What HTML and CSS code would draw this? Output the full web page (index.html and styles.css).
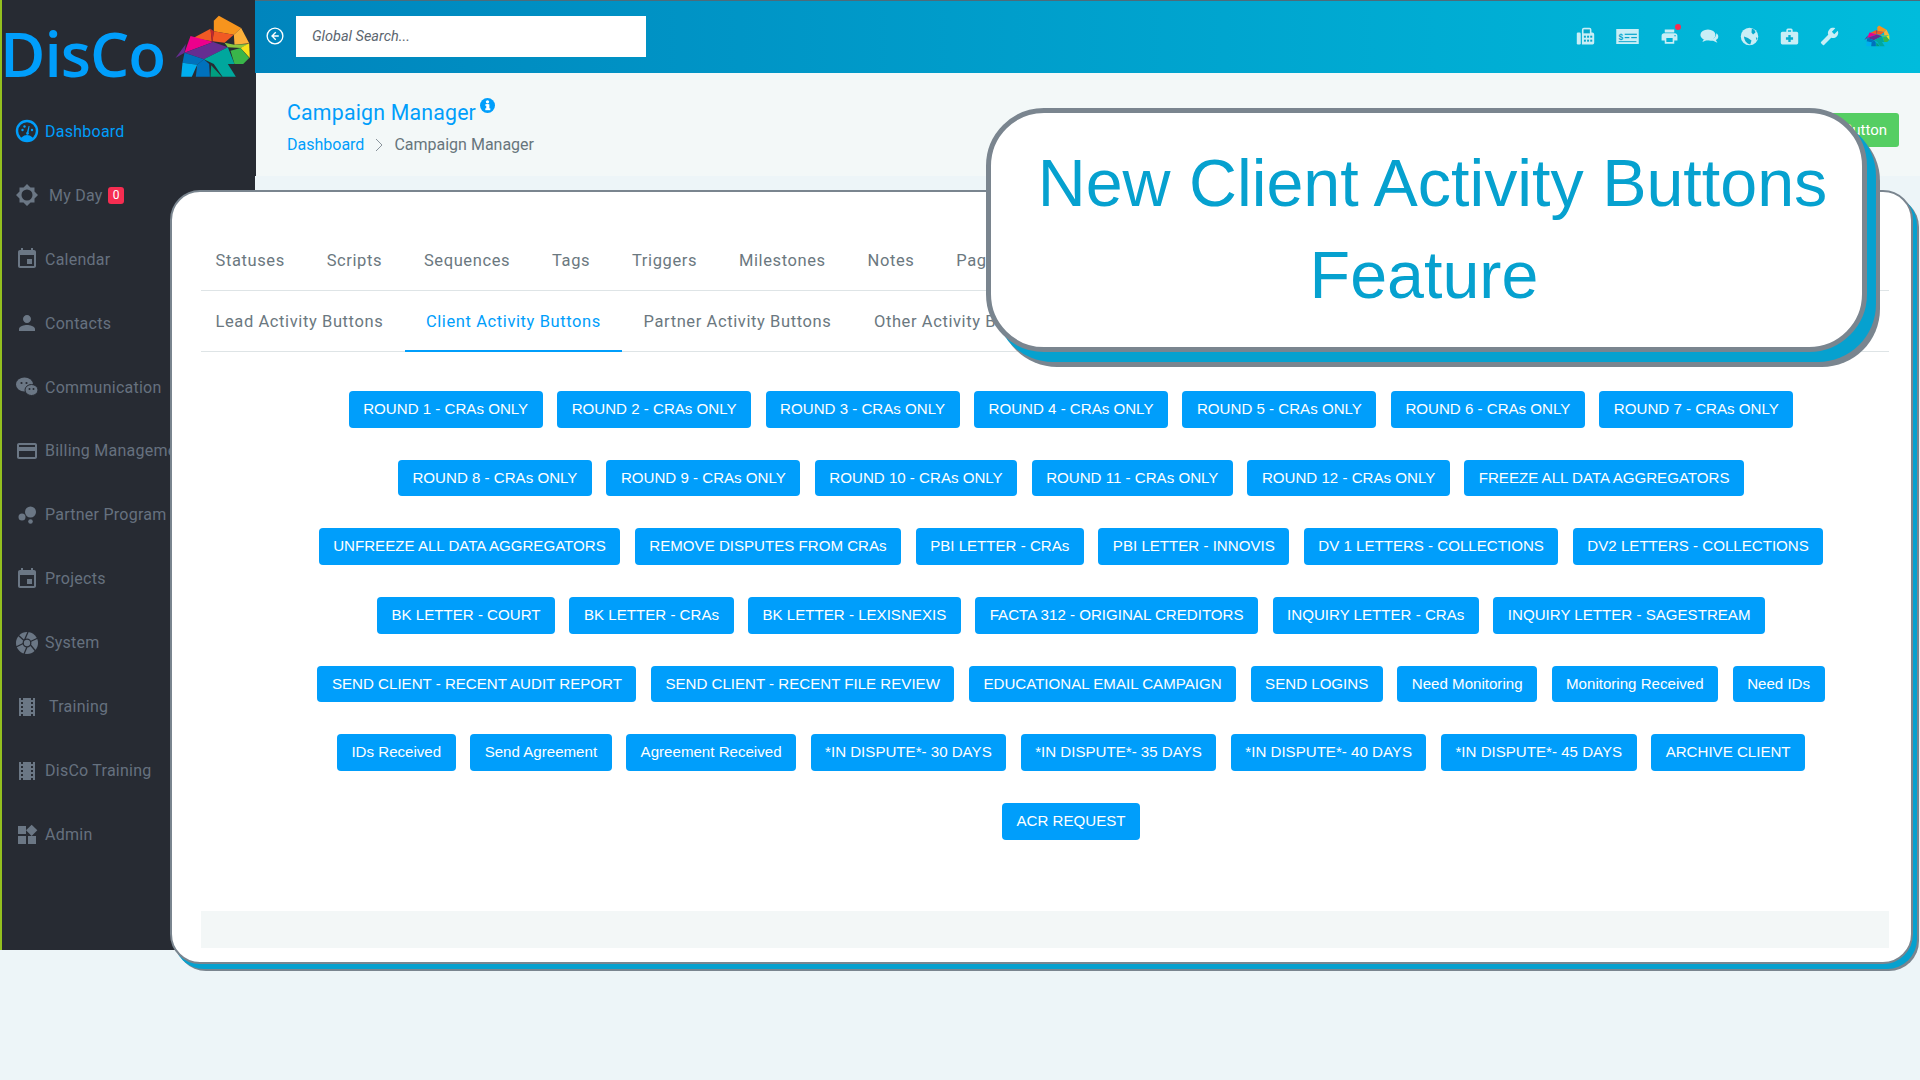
FILE: index.html
```html
<!DOCTYPE html>
<html lang="en">
  <head>
    <meta charset="UTF-8" />
    <meta name="viewport" content="width=device-width, initial-scale=1.0" />
    <title>Campaign Manager</title>
    <link rel="stylesheet" href="styles.css">
  </head>
  <body>
    <svg class="defs" width="0" height="0">
      <symbol id="elephant" viewBox="525 40 225 195">
        <polygon fill="#f7941d" points="640,60 655,45 722,82 700,102 640,92" />
        <polygon fill="#f15a24" points="640,92 700,102 672,126 636,122" />
        <polygon fill="#fbb03b" points="722,82 746,128 702,132 700,102" />
        <polygon fill="#f15a24" points="578,112 630,84 634,122" />
        <polygon fill="#c1272d" points="630,84 640,92 636,122 634,122" />
        <polygon fill="#ec008c" points="570,106 638,124 552,156" />
        <polygon fill="#662d91" points="552,156 638,124 682,140 610,176" />
        <polygon fill="#662d91" points="525,172 556,130 552,156" />
        <polygon fill="#8cc63f" points="672,126 702,132 746,130 720,142 682,140" />
        <polygon fill="#f7e11b" points="746,128 748,172 720,142" />
        <polygon fill="#00a79d" points="610,176 682,140 702,190 640,190" />
        <polygon fill="#39b54a" points="720,142 746,172 728,190 702,190 690,150" />
        <polygon fill="#0071bc" points="552,156 610,176 590,192 546,186" />
        <polygon fill="#00aeef" points="546,186 590,192 574,228 542,228" />
        <polygon fill="#0071bc" points="590,192 610,176 626,190 628,228 586,228" />
        <polygon fill="#009e7f" points="632,194 664,228 630,228" />
        <polygon fill="#00a79d" points="640,190 682,190 706,228 666,228" />
      </symbol>
      <symbol id="film" viewBox="0 0 24 24"><path d="M18 3v2h-2V3H8v2H6V3H4v18h2v-2h2v2h8v-2h2v2h2V3h-2zM8 17H6v-2h2v2zm0-4H6v-2h2v2zm0-4H6V7h2v2zm10 8h-2v-2h2v2zm0-4h-2v-2h2v2zm0-4h-2V7h2v2z" /></symbol>
      <symbol id="event" viewBox="0 0 24 24"><path d="M17 12h-5v5h5v-5zM16 1v2H8V1H6v2H5c-1.11 0-1.99.9-1.99 2L3 19c0 1.1.89 2 2 2h14c1.1 0 2-.9 2-2V5c0-1.1-.9-2-2-2h-1V1h-2zm3 18H5V8h14v11z" /></symbol>
    </svg>

    <div class="app">
      <aside class="sidebar">
        <div class="logo">
          <span class="logo-text">DisCo</span>
          <svg class="logo-mark"><use href="#elephant" /></svg>
        </div>
        <nav class="side-nav">
          <a class="side-item active">
            <svg class="side-icon" viewBox="0 0 24 24"><circle cx="12" cy="12" r="10" fill="none" stroke="currentColor" stroke-width="2.4" /><path d="M7 18a7 7 0 0 1 10 0l1.5 1.5a10 10 0 0 1-13 0z" /><path d="M12 13l1.6-6h1l-1 6.4a1.4 1.4 0 1 1-1.6-.4z" /><circle cx="7.5" cy="11" r="1.2" /><circle cx="9.5" cy="7.5" r="1.2" /><circle cx="17" cy="11" r="1.2" /></svg>
            Dashboard
          </a>
          <a class="side-item">
            <svg class="side-icon" viewBox="0 0 24 24"><path fill-rule="evenodd" d="M12 1l3.5 3.5h4V8.500L23 12l-3.500 3.500v4h-4L12 23l-3.500-3.500h-4v-4L1 12l3.500-3.500v-4h4zM12 6.500a5.500 5.500 0 1 0 0 11 5.500 5.500 0 0 0 0-11z" /></svg>
            <span class="side-label-wide">My Day</span>
            <span class="count">0</span>
          </a>
          <a class="side-item">
            <svg class="side-icon"><use href="#event" /></svg>
            Calendar
          </a>
          <a class="side-item">
            <svg class="side-icon" viewBox="0 0 24 24"><path d="M12 12c2.210 0 4-1.790 4-4s-1.790-4-4-4-4 1.790-4 4 1.790 4 4 4zm0 2c-2.670 0-8 1.340-8 4v2h16v-2c0-2.660-5.330-4-8-4z" /></svg>
            Contacts
          </a>
          <a class="side-item">
            <svg class="side-icon" viewBox="0 0 24 24"><ellipse cx="9.500" cy="9.500" rx="8.500" ry="7" /><ellipse cx="16.500" cy="15" rx="6.500" ry="5.500" stroke="#272b33" /><circle cx="6.500" cy="8" r="1.100" fill="#272b33" /><circle cx="11.500" cy="8" r="1.100" fill="#272b33" /><circle cx="14.500" cy="14" r="1" fill="#272b33" /><circle cx="18.500" cy="14" r="1" fill="#272b33" /></svg>
            Communication
          </a>
          <a class="side-item">
            <svg class="side-icon" viewBox="0 0 24 24"><path d="M20 4H4c-1.110 0-1.990.890-1.990 2L2 18c0 1.110.890 2 2 2h16c1.110 0 2-.890 2-2V6c0-1.110-.890-2-2-2zm0 14H4v-6h16v6zm0-10H4V6h16v2z" /></svg>
            Billing Management
          </a>
          <a class="side-item">
            <svg class="side-icon" viewBox="0 0 24 24"><circle cx="7" cy="14" r="3.500" /><circle cx="15.500" cy="9" r="5.500" /><circle cx="15.500" cy="18.500" r="2.300" /></svg>
            Partner Program
          </a>
          <a class="side-item">
            <svg class="side-icon"><use href="#event" /></svg>
            Projects
          </a>
          <a class="side-item">
            <svg class="side-icon" viewBox="0 0 24 24"><circle cx="12" cy="12" r="11" /><g fill="none" stroke="#272b33" stroke-width="1.300"><circle cx="12" cy="12" r="3.800" /><path d="M9.500 9L13 1M15.500 10.500L23 7M15.500 14L21 20.500M12 16L9 23M8.200 12.500L1 16M9 9.500L3 4" /></g></svg>
            System
          </a>
          <a class="side-item">
            <svg class="side-icon"><use href="#film" /></svg>
            <span class="side-label-wide">Training</span>
          </a>
          <a class="side-item">
            <svg class="side-icon"><use href="#film" /></svg>
            DisCo Training
          </a>
          <a class="side-item">
            <svg class="side-icon" viewBox="0 0 24 24"><path d="M13 13v8h8v-8h-8zM3 21h8v-8H3v8zM3 3v8h8V3H3zm13.660-1.310L11 7.340 16.660 13l5.660-5.660-5.660-5.650z" /></svg>
            Admin
          </a>
        </nav>
      </aside>

      <div class="main">
        <header class="topbar">
          <svg class="back-icon" viewBox="0 0 24 24" fill="none" stroke="#fff" stroke-width="1.800"><circle cx="12" cy="12" r="10.500" /><path d="M13 7l-5 5 5 5M8 12h9" /></svg>
          <input class="search" type="text" placeholder="Global Search..." />
          <div class="top-icons">
            <svg class="top-icon" viewBox="0 0 24 24"><rect x="1" y="7" width="5" height="15" rx="1.500" /><path d="M7.500 7V3.500A2.500 2.500 0 0 1 10 1h7a2.500 2.500 0 0 1 2.500 2.500V7h1A2.500 2.500 0 0 1 23 9.500V20a2 2 0 0 1-2 2H7.500z" /><g fill="#06a8cc"><rect x="9.500" y="3" width="8" height="5" /><rect x="10" y="11" width="2.500" height="2.500" /><rect x="14" y="11" width="2.500" height="2.500" /><rect x="18" y="11" width="2.500" height="2.500" /><rect x="10" y="16" width="2.500" height="2.500" /><rect x="14" y="16" width="2.500" height="2.500" /><rect x="18" y="16" width="2.500" height="2.500" /></g></svg>
            <svg class="top-icon cheque" viewBox="0 0 24 16"><rect width="24" height="16" /><g fill="#08a5cc"><text x="2.500" y="11.500" font-family="Liberation Sans, sans-serif" font-size="9" font-weight="700">$</text><rect x="9" y="5" width="13" height="1.300" /><rect x="9" y="8.500" width="5" height="1.300" /><rect x="16" y="8.500" width="6" height="1.300" /><rect x="2.500" y="13" width="19" height="1" /></g></svg>
            <span class="top-icon-wrap">
              <svg class="top-icon" viewBox="0 0 24 24"><path d="M19 8H5c-1.660 0-3 1.340-3 3v6h4v4h12v-4h4v-6c0-1.660-1.340-3-3-3zm-3 11H8v-5h8v5zm3-7c-.550 0-1-.450-1-1s.450-1 1-1 1 .450 1 1-.450 1-1 1zm-1-9H6v4h12V3z" /></svg>
              <i class="dot"></i>
            </span>
            <svg class="top-icon" viewBox="0 0 24 24"><ellipse cx="10" cy="10" rx="9.500" ry="7" /><path d="M5 15l-2 4 6-2.500z" /><path d="M20.500 8c2 1 3 3 2.500 5-.400 1.700-1.500 2.800-3 3.500l2 3.500-5.500-2.700c-3 .300-5.200-.300-6.500-1.500 5 .500 11-2 10.500-7.800z" /></svg>
            <svg class="top-icon" viewBox="0 0 24 24"><circle cx="12" cy="12" r="11" /><path fill="#06aacc" d="M15 2c3 1 4.500 3 4.500 5l-3 2.500-2-2.500zM5 12l5 2 4.500 3-1.500 5c-5-1-7.500-5-8-10zM20 13l2 1-1 3z" /></svg>
            <svg class="top-icon" viewBox="0 0 24 24"><path d="M8 6V4a2 2 0 0 1 2-2h4a2 2 0 0 1 2 2v2h5a2 2 0 0 1 2 2v12a2 2 0 0 1-2 2H3a2 2 0 0 1-2-2V8a2 2 0 0 1 2-2zm2 0h4V4h-4z" /><path fill="#06aecf" d="M10.500 10h3v3h3v3h-3v3h-3v-3h-3v-3h3z" /></svg>
            <svg class="top-icon wrench" viewBox="0 0 24 24"><path d="M22.700 19l-9.100-9.100c.900-2.300.400-5-1.500-6.900-2-2-5-2.400-7.400-1.300L9 6 6 9 1.600 4.700C.400 7.100.900 10.100 2.900 12.100c1.900 1.900 4.600 2.400 6.900 1.500l9.100 9.100c.400.400 1 .400 1.400 0l2.300-2.300c.500-.400.500-1.100.100-1.400z" /></svg>
            <svg class="top-logo"><use href="#elephant" /></svg>
          </div>
        </header>

        <section class="page-head">
          <div>
            <h1 class="page-title">Campaign Manager <svg class="info-icon" viewBox="0 0 24 24"><circle cx="12" cy="12" r="12" /><rect x="10" y="10" width="5" height="9" fill="#fff" /><rect x="8.500" y="16.500" width="8" height="3" fill="#fff" /><rect x="8.500" y="10" width="5" height="2.500" fill="#fff" /><circle cx="12" cy="6" r="2.600" fill="#fff" /></svg></h1>
            <div class="crumbs">
              <a class="crumb-link">Dashboard</a>
              <svg class="crumb-sep" viewBox="0 0 10 16" fill="none" stroke="#8a949c" stroke-width="1"><path d="M2 2l6 6-6 6" /></svg>
              <span>Campaign Manager</span>
            </div>
          </div>
          <a class="green-btn">Add Button</a>
        </section>
      </div>
    </div>

    <div class="card">
      <ul class="tabs tabs-main">
        <li>Statuses</li>
        <li>Scripts</li>
        <li>Sequences</li>
        <li>Tags</li>
        <li>Triggers</li>
        <li>Milestones</li>
        <li>Notes</li>
        <li>Pages</li>
      </ul>
      <ul class="tabs">
        <li>Lead Activity Buttons</li>
        <li class="current">Client Activity Buttons</li>
        <li>Partner Activity Buttons</li>
        <li>Other Activity Buttons</li>
      </ul>
      <div class="btn-area">
        <div class="btn-row">
          <a class="btn">ROUND 1 - CRAs ONLY</a>
          <a class="btn">ROUND 2 - CRAs ONLY</a>
          <a class="btn">ROUND 3 - CRAs ONLY</a>
          <a class="btn">ROUND 4 - CRAs ONLY</a>
          <a class="btn">ROUND 5 - CRAs ONLY</a>
          <a class="btn">ROUND 6 - CRAs ONLY</a>
          <a class="btn">ROUND 7 - CRAs ONLY</a>
        </div>
        <div class="btn-row">
          <a class="btn">ROUND 8 - CRAs ONLY</a>
          <a class="btn">ROUND 9 - CRAs ONLY</a>
          <a class="btn">ROUND 10 - CRAs ONLY</a>
          <a class="btn">ROUND 11 - CRAs ONLY</a>
          <a class="btn">ROUND 12 - CRAs ONLY</a>
          <a class="btn">FREEZE ALL DATA AGGREGATORS</a>
        </div>
        <div class="btn-row">
          <a class="btn">UNFREEZE ALL DATA AGGREGATORS</a>
          <a class="btn">REMOVE DISPUTES FROM CRAs</a>
          <a class="btn">PBI LETTER - CRAs</a>
          <a class="btn">PBI LETTER - INNOVIS</a>
          <a class="btn">DV 1 LETTERS - COLLECTIONS</a>
          <a class="btn">DV2 LETTERS - COLLECTIONS</a>
        </div>
        <div class="btn-row">
          <a class="btn">BK LETTER - COURT</a>
          <a class="btn">BK LETTER - CRAs</a>
          <a class="btn">BK LETTER - LEXISNEXIS</a>
          <a class="btn">FACTA 312 - ORIGINAL CREDITORS</a>
          <a class="btn">INQUIRY LETTER - CRAs</a>
          <a class="btn">INQUIRY LETTER - SAGESTREAM</a>
        </div>
        <div class="btn-row">
          <a class="btn">SEND CLIENT - RECENT AUDIT REPORT</a>
          <a class="btn">SEND CLIENT - RECENT FILE REVIEW</a>
          <a class="btn">EDUCATIONAL EMAIL CAMPAIGN</a>
          <a class="btn">SEND LOGINS</a>
          <a class="btn">Need Monitoring</a>
          <a class="btn">Monitoring Received</a>
          <a class="btn">Need IDs</a>
        </div>
        <div class="btn-row">
          <a class="btn">IDs Received</a>
          <a class="btn">Send Agreement</a>
          <a class="btn">Agreement Received</a>
          <a class="btn">*IN DISPUTE*- 30 DAYS</a>
          <a class="btn">*IN DISPUTE*- 35 DAYS</a>
          <a class="btn">*IN DISPUTE*- 40 DAYS</a>
          <a class="btn">*IN DISPUTE*- 45 DAYS</a>
          <a class="btn">ARCHIVE CLIENT</a>
        </div>
        <div class="btn-row">
          <a class="btn">ACR REQUEST</a>
        </div>
      </div>
      <div class="card-footer"></div>
    </div>

    <div class="callout">
      <div class="callout-first">New Client Activity Buttons</div>
      <div class="callout-second">Feature</div>
    </div>
  </body>
</html>
```

FILE: styles.css
```css
* {
  box-sizing: border-box;
}

body {
  margin: 0;
  height: 1080px;
  overflow: hidden;
  background: #edf5f8;
  font-family: "Roboto", "Liberation Sans", sans-serif;
}

.defs {
  display: block;
  height: 0;
}

.app {
  display: flex;
  align-items: flex-start;
}

/* sidebar */
.sidebar {
  width: 255px;
  height: 950px;
  flex-shrink: 0;
  background: #272b33;
  border-left: 2px solid #93c01f;
  overflow: hidden;
}

.logo {
  display: flex;
  align-items: flex-start;
  height: 99.300px;
}

.logo-text {
  font-family: "Open Sans", sans-serif;
  font-size: 62px;
  font-weight: 600;
  line-height: 62px;
  margin: 22px 0 0 -2px;
  color: #009efb;
  letter-spacing: -1px;
}

.logo-mark {
  width: 76px;
  height: 65px;
  margin: 14px 0 0 10px;
}

.side-nav {
  display: flex;
  flex-direction: column;
}

.side-item {
  display: flex;
  align-items: center;
  height: 63.950px;
  padding-left: 13px;
  font-size: 16px;
  letter-spacing: 0.25px;
  color: #66717f;
  white-space: nowrap;
}

.side-item.active {
  color: #009efb;
}

.side-icon {
  width: 24px;
  height: 24px;
  margin-right: 6px;
  fill: currentColor;
  color: #6b7785;
  flex-shrink: 0;
}

.active .side-icon {
  color: #009efb;
}

.side-label-wide {
  margin-left: 4px;
}

.count {
  margin-left: 5px;
  padding: 0 5px;
  height: 17px;
  line-height: 17px;
  border-radius: 3px;
  background: #f62d51;
  color: #fff;
  font-size: 12px;
  letter-spacing: 0;
}

/* top bar + page head */
.main {
  flex: 1;
}

.topbar {
  display: flex;
  align-items: center;
  height: 73px;
  padding: 0 0 2px 11px;
  border-top: 1px solid #4d6b7a;
  background: linear-gradient(90deg, #0085bd, #00bcdc);
}

.back-icon {
  width: 18px;
  height: 18px;
  margin-right: 12px;
}

.search {
  width: 350px;
  height: 41px;
  padding: 0 16px;
  border: 0;
  border-radius: 0;
  outline: none;
  font-family: "Roboto", sans-serif;
  font-size: 14.500px;
  font-style: italic;
  background: #fff;
}

.search::placeholder {
  color: #5c6670;
  opacity: 1;
}

.top-icons {
  display: flex;
  align-items: center;
  margin-left: auto;
  padding-right: 30px;
  gap: 21px;
}

.top-icon {
  display: block;
  width: 19px;
  height: 19px;
  fill: #c9eef6;
}

.top-icon.cheque {
  width: 23px;
  height: 15px;
}

.top-icon.wrench {
  transform: scaleX(-1);
}

.top-icon-wrap {
  position: relative;
  display: block;
}

.dot {
  position: absolute;
  top: -3px;
  right: -2px;
  width: 6px;
  height: 6px;
  border-radius: 50%;
  background: #f62d51;
}

.top-logo {
  width: 26px;
  height: 22px;
  margin-left: 4px;
}

.page-head {
  display: flex;
  justify-content: space-between;
  align-items: flex-start;
  height: 103px;
  padding: 25px 21px 0 31px;
  border-left: 1px solid #272b33;
  background: #f3f8f8;
}

.page-title {
  margin: 0;
  font-size: 21.300px;
  font-weight: 400;
  line-height: 28px;
  letter-spacing: 0.2px;
  color: #009efb;
}

.info-icon {
  width: 15px;
  height: 15px;
  margin-left: -2px;
  fill: #009efb;
  vertical-align: 7px;
}

.crumbs {
  display: flex;
  align-items: center;
  margin-top: 8px;
  font-size: 16px;
  color: #67757c;
}

.crumb-link {
  color: #009efb;
}

.crumb-sep {
  width: 10px;
  height: 16px;
  margin: 0 10px;
}

.green-btn {
  margin-top: 15px;
  padding: 0 12px;
  height: 34px;
  line-height: 34px;
  border-radius: 3px;
  background: #55ce63;
  color: #fff;
  font-size: 15px;
}

/* overlay card */
.card {
  position: absolute;
  left: 170px;
  top: 190px;
  width: 1743px;
  height: 774px;
  padding: 38px 22px 14px 29px;
  display: flex;
  flex-direction: column;
  background: #fff;
  border: 2px solid #7a858f;
  border-radius: 30px;
  box-shadow: 4px 5px 0 0 #06a1cf, 6px 7px 0 0 #7a858f;
}

.tabs {
  display: flex;
  height: 61px;
  margin: 0;
  padding: 0;
  list-style: none;
  border-bottom: 1px solid #dee4e6;
  flex-shrink: 0;
}

.tabs li {
  padding: 0 21.300px;
  line-height: 61px;
  font-size: 16.500px;
  letter-spacing: 0.6px;
  color: #6b7880;
  white-space: nowrap;
}

.tabs li:first-child {
  padding-left: 14.500px;
}

.tabs-main li {
  padding-right: 20.600px;
}

.tabs li.current {
  color: #009efb;
  border-bottom: 2px solid #009efb;
  height: 61px;
}

.btn-area {
  padding: 39px 0 0 52px;
}

.btn-row {
  display: flex;
  justify-content: center;
  gap: 14.500px;
  margin-bottom: 32px;
}

.btn {
  height: 36.700px;
  line-height: 36.700px;
  padding: 0 14.500px;
  border-radius: 4px;
  background: #009efb;
  color: #fff;
  font-family: "Liberation Sans", Arial, sans-serif;
  font-size: 15.100px;
  white-space: nowrap;
}

.card-footer {
  height: 37px;
  margin-top: auto;
  background: #f3f7f7;
}

/* big floating label */
.callout {
  position: absolute;
  left: 986px;
  top: 108px;
  width: 881px;
  height: 244px;
  padding-top: 24px;
  background: #fff;
  border: 5px solid #7a858f;
  border-radius: 58px;
  box-shadow: 9px 10px 0 0 #06a1cf, 13px 15px 0 0 #7a858f;
  font-family: "Liberation Sans", Arial, sans-serif;
  font-size: 66.400px;
  line-height: 92px;
  text-align: center;
  color: #06a1cf;
}

.callout-first {
  padding-left: 12px;
}

.callout-second {
  padding-right: 5px;
}
```
